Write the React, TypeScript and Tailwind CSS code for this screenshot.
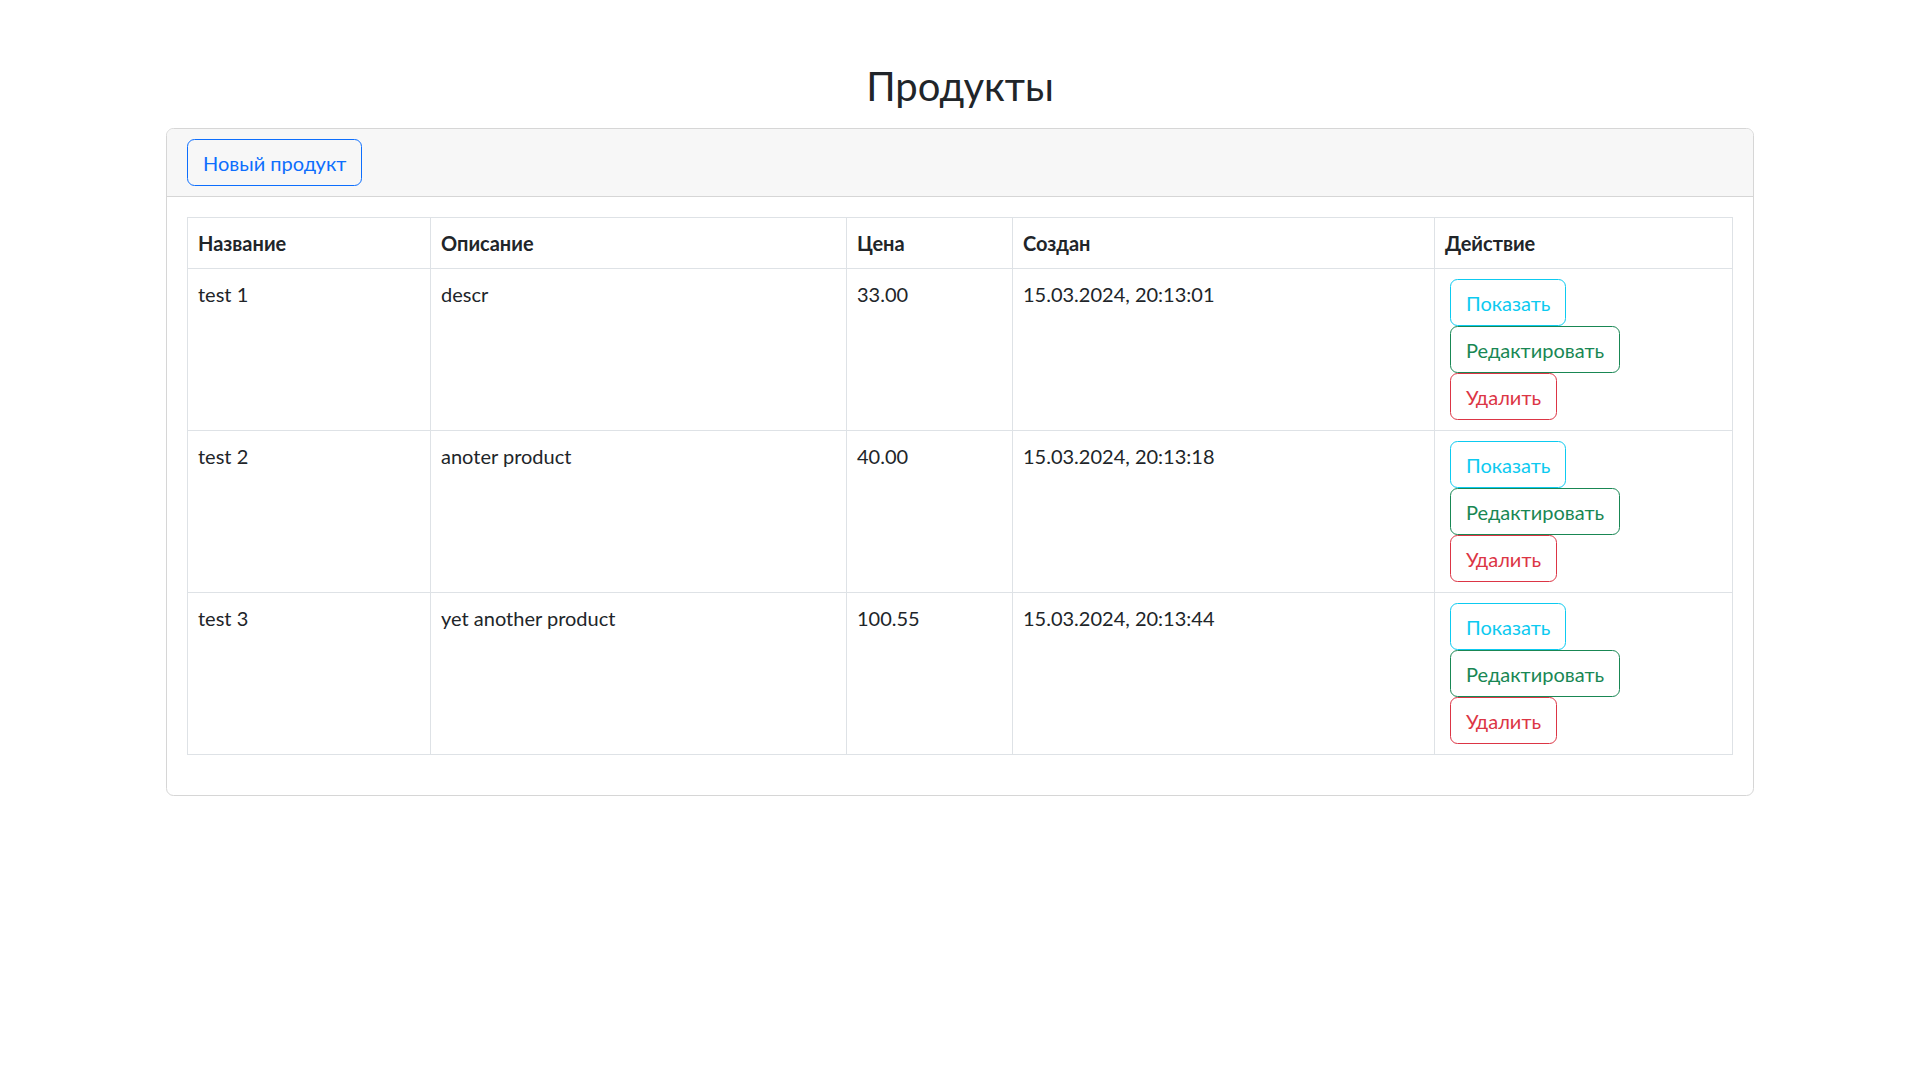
import React from 'react';

type Product = {
  name: string;
  description: string;
  price: string;
  created: string;
};

const PRODUCTS: Product[] = [
  { name: 'test 1', description: 'descr', price: '33.00', created: '15.03.2024, 20:13:01' },
  { name: 'test 2', description: 'anoter product', price: '40.00', created: '15.03.2024, 20:13:18' },
  { name: 'test 3', description: 'yet another product', price: '100.55', created: '15.03.2024, 20:13:44' },
];

const btn =
  'inline-block rounded-[7.5px] border bg-transparent px-[15px] py-[7.5px] text-[20px] leading-[1.5] whitespace-nowrap';

const cell = 'border border-[#dee2e6] p-[10px] align-top';

const App: React.FC = () => {
  return (
    <div className="min-h-screen bg-white text-[#212529] font-['Lato','Open_Sans',sans-serif] text-[20px] leading-[1.5]">
      <div className="px-[166px] pt-[62px] pb-10">
        <h1 className="text-center text-[40px] leading-[1.2] font-normal mb-[18px]">Продукты</h1>

        <div className="border border-[#d6d6d6] rounded-[7.5px] overflow-hidden">
          {/* Header */}
          <div className="bg-[#f7f7f7] border-b border-[#d6d6d6] px-[20px] py-[10px]">
            <button className={`${btn} border-[#0d6efd] text-[#0d6efd]`}>Новый продукт</button>
          </div>

          {/* Body */}
          <div className="p-[20px]">
            <table className="w-full border-collapse table-fixed mb-[20px]">
              <colgroup>
                <col className="w-[243px]" />
                <col className="w-[416px]" />
                <col className="w-[166px]" />
                <col className="w-[422px]" />
                <col />
              </colgroup>
              <thead>
                <tr>
                  {['Название', 'Описание', 'Цена', 'Создан', 'Действие'].map((h) => (
                    <th key={h} className={`${cell} text-left font-bold`}>
                      {h}
                    </th>
                  ))}
                </tr>
              </thead>
              <tbody>
                {PRODUCTS.map((p) => (
                  <tr key={p.name}>
                    <td className={cell}>{p.name}</td>
                    <td className={cell}>{p.description}</td>
                    <td className={cell}>{p.price}</td>
                    <td className={cell}>{p.created}</td>
                    <td className={cell}>
                      <div className="flex flex-col items-start pl-[5px]">
                        <button className={`${btn} border-[#0dcaf0] text-[#0dcaf0]`}>Показать</button>
                        <button className={`${btn} border-[#198754] text-[#198754]`}>Редактировать</button>
                        <button className={`${btn} border-[#dc3545] text-[#dc3545]`}>Удалить</button>
                      </div>
                    </td>
                  </tr>
                ))}
              </tbody>
            </table>
          </div>
        </div>
      </div>
    </div>
  );
};

export default App;
